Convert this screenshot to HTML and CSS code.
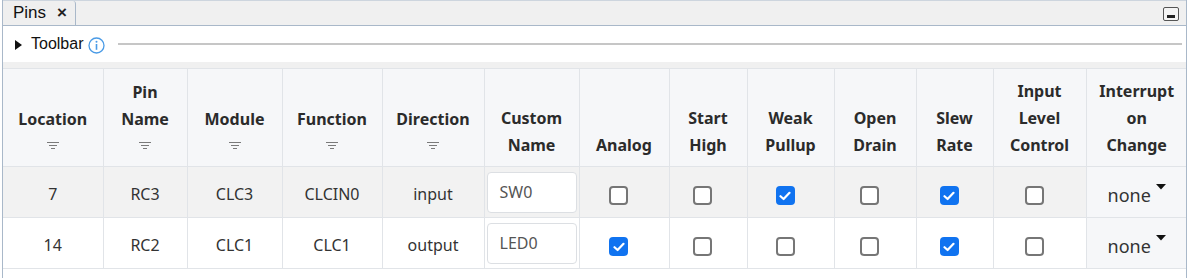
FILE: index.html
```html
<!DOCTYPE html>
<html>
<head>
<meta charset="utf-8">
<link rel="stylesheet" href="styles.css">
</head>
<body>
<div class="view">
  <div class="tabbar">
    <div class="tab"><span class="tab-label">Pins</span><span class="tab-close">×</span></div>
    <div class="tab-fill"></div>
    <div class="min-btn"><span class="min-bar"></span></div>
  </div>
  <div class="toolbar">
    <svg class="tri" width="7" height="10" viewBox="0 0 7 10"><polygon points="0,0 7,5 0,10" fill="#111"/></svg>
    <span class="toolbar-label">Toolbar</span>
    <svg class="info" width="17" height="17" viewBox="0 0 17 17"><circle cx="8.5" cy="8.5" r="7.5" fill="none" stroke="#4a9be6" stroke-width="1.3"/><rect x="7.7" y="7" width="1.6" height="5.8" fill="#4a9be6"/><circle cx="8.5" cy="4.8" r="1" fill="#4a9be6"/></svg>
    <div class="toolbar-line"></div>
  </div>
  <div class="gap"></div>
  <table class="pins">
    <colgroup>
      <col style="width:100px"><col style="width:84px"><col style="width:95px"><col style="width:100px"><col style="width:102px"><col style="width:95px"><col style="width:90px"><col style="width:78px"><col style="width:87px"><col style="width:82px"><col style="width:77px"><col style="width:93px"><col>
    </colgroup>
    <thead>
      <tr>
        <th><div>Location</div><svg class="filter" width="12" height="8" viewBox="0 0 12 8"><rect x="0" y="0" width="12" height="1" fill="#7a7a7a"/><rect x="2" y="3" width="8" height="1" fill="#7a7a7a"/><rect x="4" y="6" width="4" height="1" fill="#7a7a7a"/></svg></th>
        <th><div>Pin<br>Name</div><svg class="filter" width="12" height="8" viewBox="0 0 12 8"><rect x="0" y="0" width="12" height="1" fill="#7a7a7a"/><rect x="2" y="3" width="8" height="1" fill="#7a7a7a"/><rect x="4" y="6" width="4" height="1" fill="#7a7a7a"/></svg></th>
        <th><div>Module</div><svg class="filter" width="12" height="8" viewBox="0 0 12 8"><rect x="0" y="0" width="12" height="1" fill="#7a7a7a"/><rect x="2" y="3" width="8" height="1" fill="#7a7a7a"/><rect x="4" y="6" width="4" height="1" fill="#7a7a7a"/></svg></th>
        <th><div>Function</div><svg class="filter" width="12" height="8" viewBox="0 0 12 8"><rect x="0" y="0" width="12" height="1" fill="#7a7a7a"/><rect x="2" y="3" width="8" height="1" fill="#7a7a7a"/><rect x="4" y="6" width="4" height="1" fill="#7a7a7a"/></svg></th>
        <th><div>Direction</div><svg class="filter" width="12" height="8" viewBox="0 0 12 8"><rect x="0" y="0" width="12" height="1" fill="#7a7a7a"/><rect x="2" y="3" width="8" height="1" fill="#7a7a7a"/><rect x="4" y="6" width="4" height="1" fill="#7a7a7a"/></svg></th>
        <th><div>Custom<br>Name</div></th>
        <th><div>Analog</div></th>
        <th><div>Start<br>High</div></th>
        <th><div>Weak<br>Pullup</div></th>
        <th><div>Open<br>Drain</div></th>
        <th><div>Slew<br>Rate</div></th>
        <th><div>Input<br>Level<br>Control</div></th>
        <th><div>Interrupt<br>on<br>Change</div></th>
      </tr>
    </thead>
    <tbody>
      <tr class="odd">
        <td>7</td><td>RC3</td><td>CLC3</td><td>CLCIN0</td><td>input</td>
        <td class="cname"><div class="text-input">SW0</div></td>
        <td><span class="cb"></span></td>
        <td><span class="cb"></span></td>
        <td><span class="cb checked"><svg width="12" height="10" viewBox="0 0 12 10"><polyline points="1.5,5.2 4.6,8 10.5,1.8" fill="none" stroke="#fff" stroke-width="2.2" stroke-linecap="round" stroke-linejoin="round"/></svg></span></td>
        <td><span class="cb"></span></td>
        <td><span class="cb checked"><svg width="12" height="10" viewBox="0 0 12 10"><polyline points="1.5,5.2 4.6,8 10.5,1.8" fill="none" stroke="#fff" stroke-width="2.2" stroke-linecap="round" stroke-linejoin="round"/></svg></span></td>
        <td><span class="cb"></span></td>
        <td class="sel"><span class="sel-text">none</span><svg class="caret" width="10" height="6" viewBox="0 0 10 6"><polygon points="0,0 10,0 5,5.5" fill="#111"/></svg></td>
      </tr>
      <tr>
        <td>14</td><td>RC2</td><td>CLC1</td><td>CLC1</td><td>output</td>
        <td class="cname"><div class="text-input">LED0</div></td>
        <td><span class="cb checked"><svg width="12" height="10" viewBox="0 0 12 10"><polyline points="1.5,5.2 4.6,8 10.5,1.8" fill="none" stroke="#fff" stroke-width="2.2" stroke-linecap="round" stroke-linejoin="round"/></svg></span></td>
        <td><span class="cb"></span></td>
        <td><span class="cb"></span></td>
        <td><span class="cb"></span></td>
        <td><span class="cb checked"><svg width="12" height="10" viewBox="0 0 12 10"><polyline points="1.5,5.2 4.6,8 10.5,1.8" fill="none" stroke="#fff" stroke-width="2.2" stroke-linecap="round" stroke-linejoin="round"/></svg></span></td>
        <td><span class="cb"></span></td>
        <td class="sel"><span class="sel-text">none</span><svg class="caret" width="10" height="6" viewBox="0 0 10 6"><polygon points="0,0 10,0 5,5.5" fill="#111"/></svg></td>
      </tr>
    </tbody>
  </table>
</div>
</body>
</html>
```

FILE: styles.css
```css
html, body {
  margin: 0;
  padding: 0;
  background: #ffffff;
}
body {
  font-family: "Noto Sans", "Open Sans", sans-serif;
  color: #333;
}
.view {
  margin-left: 2px;
  width: 1185px;
  border-left: 1px solid #a9b8c9;
  border-right: 1px solid #a9b8c9;
  height: 278px;
  box-sizing: border-box;
  overflow: hidden;
}
.tabbar {
  display: flex;
  align-items: flex-end;
  height: 26px;
  box-sizing: border-box;
  background: #f0f0f0;
  border-top: 1px solid #cdd5de;
  border-bottom: 1px solid #a9b8c9;
}
.tab {
  display: flex;
  align-items: center;
  height: 24px;
  width: 73px;
  box-sizing: border-box;
  background: #efefef;
  border-right: 1px solid #a9b8c9;
  border-top-right-radius: 3px;
  padding-left: 10px;
  font-family: "Liberation Sans", Arial, sans-serif;
  font-size: 17px;
  color: #111;
}
.tab-close {
  margin-left: 11px;
  font-weight: bold;
  font-size: 17px;
  color: #222;
}
.tab-fill {
  flex: 1;
}
.min-btn {
  width: 16px;
  height: 14px;
  box-sizing: border-box;
  border: 1.5px solid #555;
  border-radius: 2px;
  background: #f4f4f4;
  margin: 0 7px 4px 0;
  display: flex;
  align-items: flex-end;
  justify-content: center;
  padding-bottom: 2px;
}
.min-bar {
  width: 8px;
  height: 3px;
  background: #222;
}
.toolbar {
  height: 36px;
  display: flex;
  align-items: center;
  padding-left: 12px;
  padding-right: 4px;
  background: #fff;
}
.tri {
  margin-top: 2px;
}
.toolbar-label {
  font-family: "Liberation Sans", Arial, sans-serif;
  font-size: 16px;
  color: #111;
  margin-left: 9px;
}
.info {
  margin-left: 5px;
  margin-top: 2px;
}
.toolbar-line {
  flex: 1;
  height: 2px;
  background: #c6c6c6;
  margin-left: 13px;
}
.gap {
  height: 6px;
  background: #f0f0f0;
}
.pins {
  border-collapse: collapse;
  table-layout: fixed;
  width: 1184px;
}
.pins th, .pins td {
  border: 1px solid #e1e4e8;
  text-align: center;
  padding: 0;
}
.pins tr > :first-child {
  border-left: none;
}
.pins tr > :last-child {
  border-right: none;
}
.pins th {
  background: #f6f7f9;
  height: 90px;
  vertical-align: bottom;
  padding-bottom: 7px;
  font-weight: 700;
  font-size: 16px;
  line-height: 27px;
  color: #2b2b2b;
}
.pins th .filter {
  display: block;
  margin: 9px auto 9px;
}
.pins td {
  height: 47px;
  font-size: 16px;
  color: #333;
  background: #fff;
  padding-top: 3px;
}
.pins tr.odd td {
  background: #f2f2f2;
}
.pins td.sel, .pins tr.odd td.sel {
  background: #f6f7f9;
}
.pins td.cname {
  padding-top: 0;
  height: 50px;
}
.text-input {
  margin: 0 2px 0 2px;
  height: 41px;
  box-sizing: border-box;
  border: 1px solid #dcdfe3;
  border-radius: 4px;
  background: #fff;
  text-align: left;
  padding-left: 12px;
  line-height: 39px;
  font-size: 16px;
  color: #555;
}
.cb {
  display: inline-flex;
  align-items: center;
  justify-content: center;
  width: 19px;
  height: 19px;
  box-sizing: border-box;
  border: 2px solid #767676;
  border-radius: 4px;
  background: #fff;
  margin-right: 11px;
  margin-top: 3px;
  vertical-align: middle;
}
.cb.checked {
  border: none;
  background: #1073f0;
}
.sel-text {
  font-size: 18px;
  color: #333;
  vertical-align: middle;
  position: relative;
  top: 1px;
}
.caret {
  vertical-align: middle;
  margin-left: 5px;
  position: relative;
  top: -7px;
}
```
